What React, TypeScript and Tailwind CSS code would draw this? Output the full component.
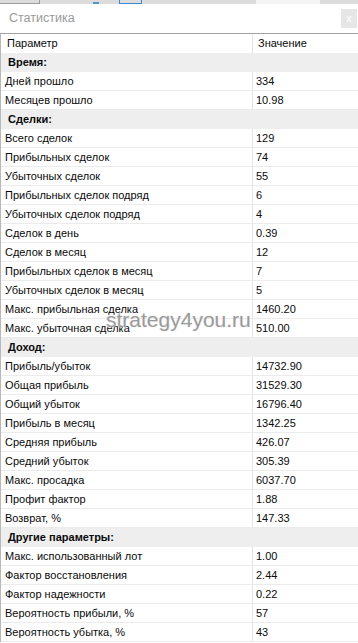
import React from "react";

interface Section {
  title: string;
  rows: [string, string][];
}

const sections: Section[] = [
  {
    title: "Время:",
    rows: [
      ["Дней прошло", "334"],
      ["Месяцев прошло", "10.98"],
    ],
  },
  {
    title: "Сделки:",
    rows: [
      ["Всего сделок", "129"],
      ["Прибыльных сделок", "74"],
      ["Убыточных сделок", "55"],
      ["Прибыльных сделок подряд", "6"],
      ["Убыточных сделок подряд", "4"],
      ["Сделок в день", "0.39"],
      ["Сделок в месяц", "12"],
      ["Прибыльных сделок в месяц", "7"],
      ["Убыточных сделок в месяц", "5"],
      ["Макс. прибыльная сделка", "1460.20"],
      ["Макс. убыточная сделка", "510.00"],
    ],
  },
  {
    title: "Доход:",
    rows: [
      ["Прибыль/убыток", "14732.90"],
      ["Общая прибыль", "31529.30"],
      ["Общий убыток", "16796.40"],
      ["Прибыль в месяц", "1342.25"],
      ["Средняя прибыль", "426.07"],
      ["Средний убыток", "305.39"],
      ["Макс. просадка", "6037.70"],
      ["Профит фактор", "1.88"],
      ["Возврат, %", "147.33"],
    ],
  },
  {
    title: "Другие параметры:",
    rows: [
      ["Макс. использованный лот", "1.00"],
      ["Фактор восстановления", "2.44"],
      ["Фактор надежности", "0.22"],
      ["Вероятность прибыли, %", "57"],
      ["Вероятность убытка, %", "43"],
    ],
  },
];

function ItemRow({ name, value }: { name: string; value: string }) {
  return (
    <div className="flex h-[19px] border-b border-[#ebebeb]">
      <div className="w-[252px] shrink-0 border-r border-[#e4e4e4] pl-[4px] leading-[18px]">
        {name}
      </div>
      <div className="pl-[3px] leading-[18px]">{value}</div>
    </div>
  );
}

export default function App() {
  return (
    <div
      className="relative w-[358px] h-[643px] overflow-hidden bg-white text-[11px] text-[#0a0a0a]"
      style={{ fontFamily: '"Liberation Sans", Arial, sans-serif' }}
    >
      {/* cropped strip of the window behind */}
      <div className="flex h-[4px] bg-[#dcdcdc]">
        <div className="w-[40px] border-r border-b border-[#9c9c9c]" />
        <div className="w-[53px]" />
        <div className="w-[6px] mt-[2px] bg-[#5b8fc9]" />
        <div className="w-[20px]" />
        <div className="w-[23px] border-x border-b border-[#3d86d8]" />
        <div className="w-[114px]" />
        <div className="w-[64px] bg-[#f4f4f4]" />
      </div>

      {/* title bar */}
      <div className="flex h-[29px] items-center justify-between pl-[9px] pr-[1px]">
        <span className="text-[12.5px] text-[#9a9a9a]">Статистика</span>
        <div className="flex h-[19px] w-[16px] items-center justify-center bg-[#e6e6e6] text-[10px] font-bold text-[#fbfbfb]">
          x
        </div>
      </div>
      <div className="h-px bg-[#a3a3a3]" />

      {/* table */}
      <div className="border-l border-[#b8b8b8]">
        <div className="flex h-[19px]">
          <div className="w-[252px] shrink-0 border-r border-[#e4e4e4] pl-[6px] leading-[19px]">
            Параметр
          </div>
          <div className="pl-[5px] leading-[19px]">Значение</div>
        </div>
        {sections.map((s) => (
          <div key={s.title}>
            <div className="h-[19px] bg-[#eeeeee] pl-[7px] font-bold leading-[19px]">
              {s.title}
            </div>
            {s.rows.map(([name, value]) => (
              <ItemRow key={name} name={name} value={value} />
            ))}
          </div>
        ))}
      </div>

      {/* watermark */}
      <div className="pointer-events-none absolute left-[106px] top-[304px] text-[21px] text-[#7a7a7a]/75 [text-shadow:0_0_2px_#fff,0_0_1px_#fff,0_0_1px_#999]">
        strategy4you.ru
      </div>
    </div>
  );
}
